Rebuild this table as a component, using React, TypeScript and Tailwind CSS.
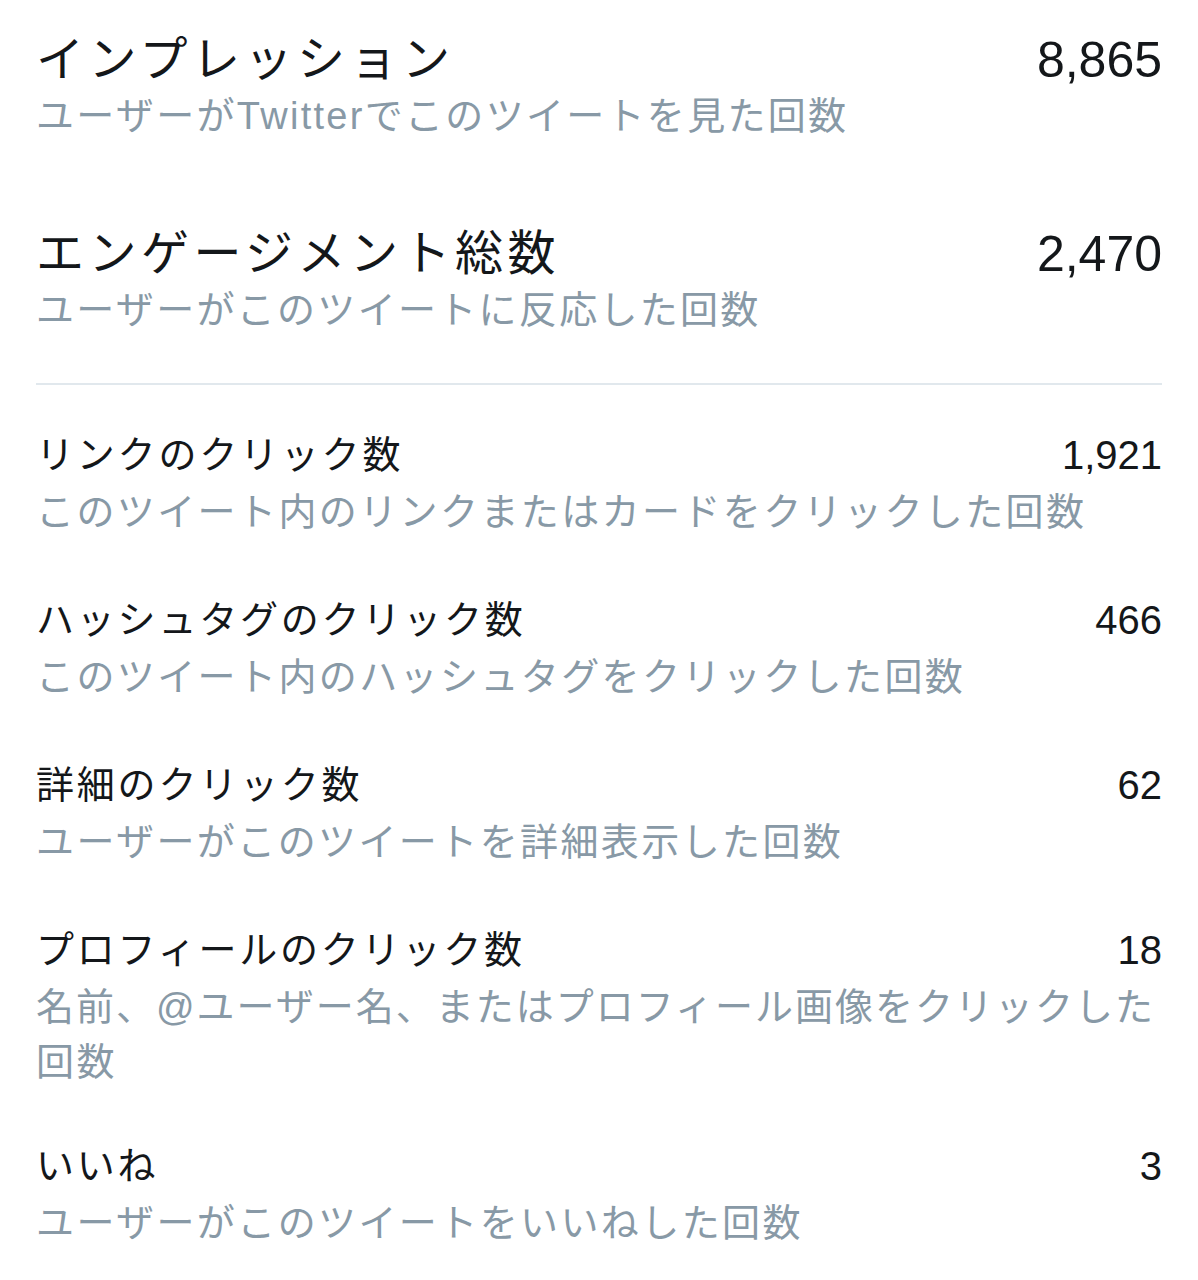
import React from 'react'

const font = { fontFamily: '"Liberation Sans", "Noto Sans CJK JP", sans-serif' }

type Metric = {
  label: string
  desc: React.ReactNode
  value: string
}

const topMetrics: Metric[] = [
  { label: 'インプレッション', desc: 'ユーザーがTwitterでこのツイートを見た回数', value: '8,865' },
  { label: 'エンゲージメント総数', desc: 'ユーザーがこのツイートに反応した回数', value: '2,470' },
]

const detailMetrics: Metric[] = [
  { label: 'リンクのクリック数', desc: 'このツイート内のリンクまたはカードをクリックした回数', value: '1,921' },
  { label: 'ハッシュタグのクリック数', desc: 'このツイート内のハッシュタグをクリックした回数', value: '466' },
  { label: '詳細のクリック数', desc: 'ユーザーがこのツイートを詳細表示した回数', value: '62' },
  {
    label: 'プロフィールのクリック数',
    desc: (
      <>
        <span className="whitespace-nowrap tracking-[2px]">名前、@ユーザー名、またはプロフィール画像をクリックした</span>
        <br />
        回数
      </>
    ),
    value: '18',
  },
  { label: 'いいね', desc: 'ユーザーがこのツイートをいいねした回数', value: '3' },
]

function BigRow({ m, first }: { m: Metric; first?: boolean }) {
  return (
    <div className={first ? '' : 'mt-[82px]'}>
      <div className="flex items-center justify-between">
        <span className="text-[48px] leading-[56px] tracking-[4.5px] text-[#14171a]">{m.label}</span>
        <span className="text-[50px] leading-[56px] text-[#14171a]">{m.value}</span>
      </div>
      <div className="text-[38px] leading-[56px] tracking-[2.3px] text-[#8899a6]">{m.desc}</div>
    </div>
  )
}

function SmallRow({ m }: { m: Metric }) {
  return (
    <div className="mt-[52px] first:mt-0 last:mt-[48px]">
      <div className="flex items-center justify-between">
        <span className="text-[38px] leading-[56px] tracking-[2.8px] text-[#14171a]">{m.label}</span>
        <span className="text-[40px] leading-[56px] text-[#14171a]">{m.value}</span>
      </div>
      <div className="pt-[2px] text-[38px] leading-[55px] tracking-[2.4px] text-[#8899a6]">{m.desc}</div>
    </div>
  )
}

export default function App() {
  return (
    <div style={font} className="min-h-[1280px] w-full bg-white px-[36px] pt-[32px]">
      {topMetrics.map((m, i) => (
        <BigRow key={m.label} m={m} first={i === 0} />
      ))}

      <div className="mt-[45px] h-[2px] bg-[#e1e8ed]" />

      <div className="mt-[42px]">
        {detailMetrics.map(m => (
          <SmallRow key={m.label} m={m} />
        ))}
      </div>
    </div>
  )
}
